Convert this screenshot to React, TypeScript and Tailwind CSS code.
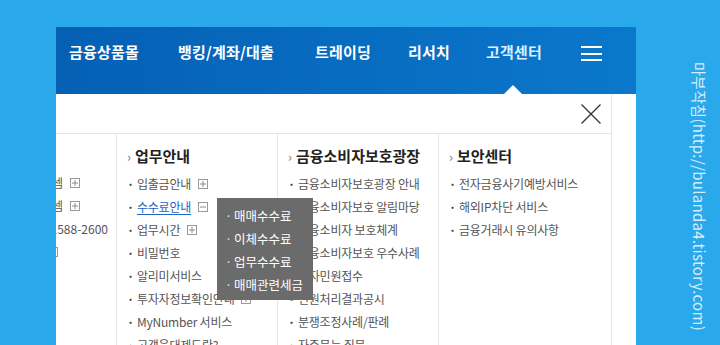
import React from "react";

const font = { fontFamily: '"Noto Sans CJK KR", "Noto Sans", sans-serif' };

function PlusBox({ minus = false }: { minus?: boolean }) {
  return (
    <svg width="10" height="10" viewBox="0 0 10 10" className="shrink-0">
      <rect x="0.5" y="0.5" width="9" height="9" fill="white" stroke="#9a9a9a" />
      <line x1="2" y1="5" x2="8" y2="5" stroke="#8a8a8a" />
      {!minus && <line x1="5" y1="2" x2="5" y2="8" stroke="#8a8a8a" />}
    </svg>
  );
}

type Item = { label: string; box?: "plus" | "minus"; active?: boolean };

const columns: { title: string; items: Item[] }[] = [
  {
    title: "업무안내",
    items: [
      { label: "입출금안내", box: "plus" },
      { label: "수수료안내", box: "minus", active: true },
      { label: "업무시간", box: "plus" },
      { label: "비밀번호" },
      { label: "알리미서비스" },
      { label: "투자자정보확인안내", box: "plus" },
      { label: "MyNumber 서비스" },
      { label: "고객응대제도란?" },
    ],
  },
  {
    title: "금융소비자보호광장",
    items: [
      { label: "금융소비자보호광장 안내" },
      { label: "금융소비자보호 알림마당" },
      { label: "금융소비자 보호체계" },
      { label: "금융소비자보호 우수사례" },
      { label: "전자민원접수" },
      { label: "민원처리결과공시" },
      { label: "분쟁조정사례/판례" },
      { label: "자주묻는 질문" },
    ],
  },
  {
    title: "보안센터",
    items: [
      { label: "전자금융사기예방서비스" },
      { label: "해외IP차단 서비스" },
      { label: "금융거래시 유의사항" },
    ],
  },
];

const navItems = [
  { label: "금융상품몰", w: "w-[109px]" },
  { label: "뱅킹/계좌/대출", w: "w-[137px]" },
  { label: "트레이딩", w: "w-[93px]" },
  { label: "리서치", w: "w-[78px]" },
  { label: "고객센터", w: "w-[95px]" },
];

export default function App() {
  return (
    <div className="relative w-[720px] h-[345px] overflow-hidden bg-[#2aa8ec] pl-[56px] pt-[27px]" style={font}>
      <div className="w-[580px] h-[318px] overflow-hidden bg-white flex flex-col">
        {/* top navigation */}
        <div className="relative h-[67px] shrink-0 bg-linear-to-r from-[#0560b4] to-[#0b78cc] flex items-start pt-[15px] pl-[13px]">
          {navItems.map((n) => (
            <div
              key={n.label}
              className={`${n.w} text-[15px] font-bold leading-[20px] whitespace-nowrap tracking-[0.2px] ${
                n.label === "고객센터" ? "text-[#dcefff]" : "text-white"
              }`}
            >
              {n.label}
            </div>
          ))}
          <div className="flex flex-col gap-[4.5px] pt-[4px]">
            <span className="block w-[21px] h-[2px] bg-white" />
            <span className="block w-[21px] h-[2px] bg-white" />
            <span className="block w-[21px] h-[2px] bg-white" />
          </div>
          <div className="absolute left-[448px] bottom-0 w-0 h-0 border-l-[9px] border-r-[9px] border-b-[9px] border-l-transparent border-r-transparent border-b-white" />
        </div>

        {/* dropdown body */}
        <div className="flex flex-1">
          <div className="w-[555px] shrink-0 flex flex-col">
            <div className="h-[40px] border-b border-[#e4e4e4] flex justify-end pt-[10px] pr-[10px]">
              <svg width="20" height="20" viewBox="0 0 20 20">
                <line x1="0.5" y1="0.5" x2="19.5" y2="19.5" stroke="#333" strokeWidth="1.2" />
                <line x1="19.5" y1="0.5" x2="0.5" y2="19.5" stroke="#333" strokeWidth="1.2" />
              </svg>
            </div>
            <div className="flex ml-[-100px] flex-1">
              {/* partially hidden left column */}
              <div className="w-[161px] shrink-0 border-r border-[#e6e6e6] pl-[10px]">
                <div className="pt-[12px] text-[15px] leading-[20px] font-bold text-[#222]">› 고객센터</div>
                <ul className="mt-[5px] text-[12px] leading-[23px] text-[#555]">
                  <li className="flex items-center">
                    <span className="w-[97px] text-right overflow-hidden whitespace-nowrap">· 고객상담시스셈</span>
                    <span className="ml-[7px]"><PlusBox /></span>
                  </li>
                  <li className="flex items-center">
                    <span className="w-[97px] text-right overflow-hidden whitespace-nowrap">· 원격지원시스셈</span>
                    <span className="ml-[7px]"><PlusBox /></span>
                  </li>
                  <li className="flex items-center">
                    <span className="w-[142px] text-right overflow-hidden whitespace-nowrap">· 대표번호 1588-2600</span>
                  </li>
                  <li className="flex items-center">
                    <span className="w-[81px] text-right overflow-hidden whitespace-nowrap">· 상담예약</span>
                    <span className="ml-[1px]"><PlusBox /></span>
                  </li>
                </ul>
              </div>
              {columns.map((c, i) => (
                <div
                  key={c.title}
                  className={`w-[161px] shrink-0 pl-[10px] ${i < 2 ? "border-r border-[#e6e6e6]" : ""}`}
                >
                  <div className="pt-[12px] text-[15px] leading-[20px] font-bold text-[#222] whitespace-nowrap">
                    <span className="text-[#777] font-normal text-[13px] mr-[4px]">›</span>
                    {c.title}
                  </div>
                  <ul className="mt-[5px] text-[12px] leading-[23px] text-[#555] tracking-[-0.2px]">
                    {c.items.map((it) => (
                      <li key={it.label} className="flex items-center whitespace-nowrap">
                        <span className="text-[#444] font-bold mr-[3px]">·</span>
                        <span className={it.active ? "text-[#2064c8] underline underline-offset-2" : ""}>
                          {it.label}
                        </span>
                        {it.box && (
                          <span className="ml-[7px]">
                            <PlusBox minus={it.box === "minus"} />
                          </span>
                        )}
                      </li>
                    ))}
                  </ul>
                </div>
              ))}
            </div>
          </div>
          <div className="flex-1 border-l border-[#e6e6e6]" />
        </div>
      </div>

      {/* sub menu popup */}
      <div className="absolute left-[217px] top-[198px] w-[96px] h-[102px] bg-[#6b6b6b] pl-[8px] pt-[6px]">
        <ul className="text-[12.5px] leading-[23px] text-white">
          {["매매수수료", "이체수수료", "업무수수료", "매매관련세금"].map((s) => (
            <li key={s} className="whitespace-nowrap">
              <span className="text-[#ddd] mr-[2px]">·</span>
              {s}
            </li>
          ))}
        </ul>
      </div>

      {/* watermark */}
      <div className="absolute left-[708px] top-[62px] origin-top-left rotate-90 whitespace-nowrap text-[15px] leading-[18px] tracking-[0.3px] text-[#d6eefb]">
        마부작침(http://bulanda4.tistory.com)
      </div>
    </div>
  );
}
